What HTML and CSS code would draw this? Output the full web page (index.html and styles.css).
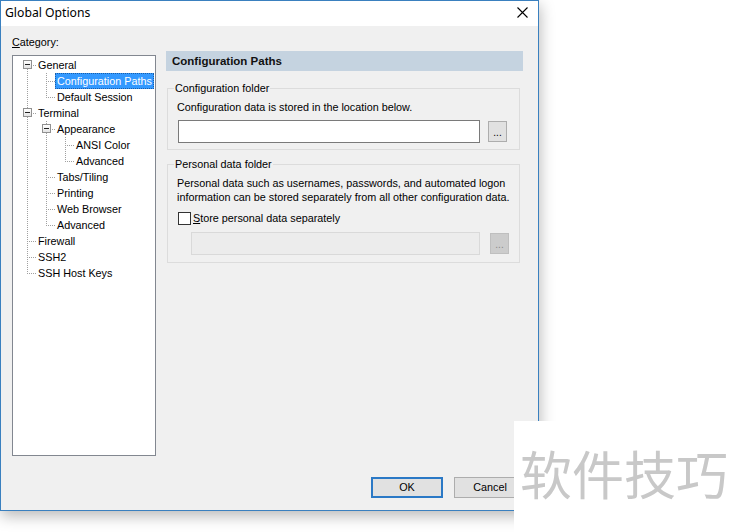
FILE: index.html
```html
<!DOCTYPE html>
<html>
<head>
<meta charset="utf-8">
<link rel="stylesheet" href="styles.css">
</head>
<body>
<div class="screen">
  <div class="dialog">
    <div class="titlebar">
      <span class="title">Global Options</span>
      <svg class="close" width="11" height="11" viewBox="0 0 11 11"><path d="M0.5 0.5 L10.5 10.5 M10.5 0.5 L0.5 10.5" stroke="#000" stroke-width="1.1" fill="none"/></svg>
    </div>
    <div class="dbody">
      <div class="main">
        <div class="leftcol">
          <div class="cat-label"><u>C</u>ategory:</div>
          <div class="tree">
            <div class="row"><span class="cell first h"><span class="exp"></span></span><span class="label">General</span></div>
            <div class="row"><span class="cell v"></span><span class="cell v h"></span><span class="label sel">Configuration Paths</span></div>
            <div class="row"><span class="cell v"></span><span class="cell top h"></span><span class="label">Default Session</span></div>
            <div class="row"><span class="cell v h"><span class="exp"></span></span><span class="label">Terminal</span></div>
            <div class="row"><span class="cell v"></span><span class="cell v h"><span class="exp"></span></span><span class="label">Appearance</span></div>
            <div class="row"><span class="cell v"></span><span class="cell v"></span><span class="cell v h"></span><span class="label">ANSI Color</span></div>
            <div class="row"><span class="cell v"></span><span class="cell v"></span><span class="cell top h"></span><span class="label">Advanced</span></div>
            <div class="row"><span class="cell v"></span><span class="cell v h"></span><span class="label">Tabs/Tiling</span></div>
            <div class="row"><span class="cell v"></span><span class="cell v h"></span><span class="label">Printing</span></div>
            <div class="row"><span class="cell v"></span><span class="cell v h"></span><span class="label">Web Browser</span></div>
            <div class="row"><span class="cell v"></span><span class="cell top h"></span><span class="label">Advanced</span></div>
            <div class="row"><span class="cell v h"></span><span class="label">Firewall</span></div>
            <div class="row"><span class="cell v h"></span><span class="label">SSH2</span></div>
            <div class="row"><span class="cell top h"></span><span class="label">SSH Host Keys</span></div>
          </div>
        </div>
        <div class="rightcol">
          <div class="panel-head">Configuration Paths</div>
          <fieldset class="group g1">
            <legend>Configuration folder</legend>
            <p class="desc">Configuration data is stored in the location below.</p>
            <div class="pathrow">
              <div class="field"></div>
              <div class="browse">...</div>
            </div>
          </fieldset>
          <fieldset class="group g2">
            <legend>Personal data folder</legend>
            <p class="desc2">Personal data such as usernames, passwords, and automated logon<br>information can be stored separately from all other configuration data.</p>
            <div class="check"><span class="box"></span><span><u>S</u>tore personal data separately</span></div>
            <div class="pathrow2">
              <div class="field disabled"></div>
              <div class="browse disabled">...</div>
            </div>
          </fieldset>
        </div>
      </div>
      <div class="footer">
        <div class="btn ok">OK</div>
        <div class="btn">Cancel</div>
      </div>
    </div>
  </div>
  <div class="watermark">软件技巧</div>
</div>
</body>
</html>
```

FILE: styles.css
```css
html, body {
  margin: 0;
  padding: 0;
  background: #fff;
}
.screen {
  position: relative;
  width: 735px;
  height: 532px;
  overflow: hidden;
  background: #fff;
  font-family: "Liberation Sans", Arial, sans-serif;
  font-size: 10.8px;
  color: #000;
}
.dialog {
  box-sizing: border-box;
  width: 539px;
  height: 511px;
  border: 1px solid #3a80bf;
  background: #f0f0f0;
  display: flex;
  flex-direction: column;
  box-shadow: 1px 5px 14px rgba(0, 0, 0, 0.28);
}
.titlebar {
  height: 25px;
  background: #fff;
  display: flex;
  align-items: center;
  padding: 0 10px 0 4px;
  flex: none;
}
.title {
  font-family: "Noto Sans", "Open Sans", sans-serif;
  font-size: 12.2px;
  flex: 1;
  padding-bottom: 2px;
}
.close {
  display: block;
  margin-top: -3px;
}
.dbody {
  flex: 1;
  display: flex;
  flex-direction: column;
}
.main {
  height: 430px;
  display: flex;
  align-items: flex-start;
  padding-left: 11px;
}
.leftcol {
  width: 144px;
  padding-top: 9px;
}
.cat-label {
  line-height: 14px;
  height: 14px;
  margin-bottom: 6px;
}
.cat-label u, .check u {
  text-decoration: underline;
  text-underline-offset: 1px;
}
.tree {
  box-sizing: border-box;
  height: 401px;
  border: 1px solid #828790;
  background: #fff;
  padding: 1px 0 0 4px;
}
.row {
  display: flex;
  height: 16px;
  line-height: 16px;
  white-space: nowrap;
}
.cell {
  position: relative;
  width: 19px;
  height: 16px;
  flex: none;
}
.cell.v::before, .cell.top::before, .cell.first::before {
  content: "";
  position: absolute;
  left: 10px;
  width: 1px;
  top: 0;
  bottom: 0;
  background: repeating-linear-gradient(to bottom, #a0a0a0 0 1px, transparent 1px 2px);
}
.cell.top::before {
  bottom: 8px;
}
.cell.first::before {
  top: 8px;
}
.cell.h::after {
  content: "";
  position: absolute;
  left: 10px;
  right: 0;
  top: 8px;
  height: 1px;
  background: repeating-linear-gradient(to right, #a0a0a0 0 1px, transparent 1px 2px);
}
.exp {
  position: absolute;
  left: 6px;
  top: 3px;
  width: 9px;
  height: 9px;
  box-sizing: border-box;
  border: 1px solid #919191;
  background: linear-gradient(#ffffff, #e4e4e4);
  z-index: 2;
}
.exp::after {
  content: "";
  position: absolute;
  left: 1px;
  top: 3px;
  width: 5px;
  height: 1px;
  background: #222;
}
.label {
  padding: 0 2px;
  margin-left: 0;
  height: 16px;
  box-sizing: border-box;
}
.label.sel {
  background: #3399ff;
  color: #fff;
  outline: 1px dotted #1a5ea8;
  outline-offset: -1px;
}
.rightcol {
  width: 357px;
  margin-left: 10px;
  margin-top: 25px;
}
.panel-head {
  height: 20px;
  line-height: 20px;
  background: #c5d3e0;
  font-weight: bold;
  font-size: 11.5px;
  padding-left: 6px;
  color: #111;
}
.group {
  margin: 0 3px 0 1px;
  padding: 0 0 0 10px;
  border: 1px solid #dcdcdc;
  min-width: 0;
}
.group legend {
  padding: 0 1px;
  margin-left: -4px;
  line-height: 14px;
  height: 14px;
}
.g1 {
  margin-top: 10px;
  padding-top: 5px;
  padding-bottom: 6px;
}
.g2 {
  margin-top: 7px;
  padding-top: 6px;
  padding-bottom: 7px;
}
.desc {
  margin: 0 0 6px -1px;
  line-height: 14px;
}
.desc2 {
  margin: 0 0 0 -1px;
  line-height: 13.5px;
  white-space: nowrap;
}
.pathrow, .pathrow2 {
  display: flex;
  align-items: flex-start;
}
.field {
  box-sizing: border-box;
  width: 302px;
  height: 23px;
  border: 1px solid #7a7a7a;
  background: #fff;
}
.browse {
  box-sizing: border-box;
  width: 19px;
  height: 21px;
  margin-left: 8px;
  margin-top: 1px;
  border: 1px solid #adadad;
  background: #e1e1e1;
  text-align: center;
  line-height: 22px;
  font-size: 10px;
  letter-spacing: 0;
}
.check {
  display: flex;
  align-items: center;
  margin-top: 8px;
  height: 13px;
  line-height: 13px;
}
.check .box {
  box-sizing: border-box;
  width: 13px;
  height: 13px;
  border: 1px solid #333;
  background: #fff;
  margin-right: 2px;
  flex: none;
}
.pathrow2 {
  margin-top: 7px;
  padding-left: 13px;
}
.field.disabled {
  width: 289px;
  border-color: #d9d9d9;
  background: #ececec;
}
.browse.disabled {
  margin-left: 10px;
  background: #cccccc;
  border-color: #bfbfbf;
  color: #8a8a8a;
}
.footer {
  flex: 1;
  display: flex;
  justify-content: flex-end;
  align-items: flex-start;
  padding: 21px 12px 0 0;
  gap: 11px;
}
.btn {
  box-sizing: border-box;
  width: 72px;
  height: 21px;
  border: 1px solid #adadad;
  background: #e1e1e1;
  text-align: center;
  line-height: 19px;
}
.btn.ok {
  border: 2px solid #2b79c6;
  line-height: 17px;
}
.watermark {
  position: absolute;
  left: 514px;
  top: 421px;
  width: 221px;
  height: 111px;
  box-sizing: border-box;
  background: #fff;
  padding: 26px 0 0 6px;
  font-family: "Noto Sans CJK SC", sans-serif;
  font-size: 52px;
  line-height: 52px;
  color: #c8c8c8;
  white-space: nowrap;
}
```
